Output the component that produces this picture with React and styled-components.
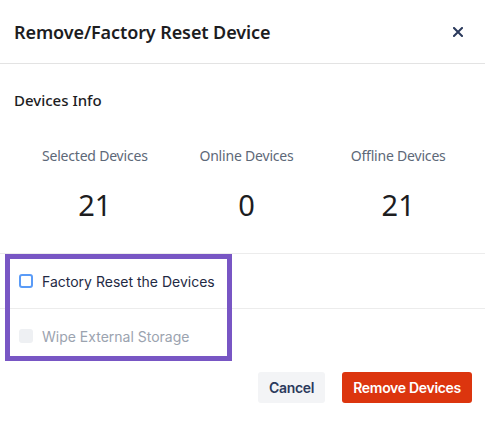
import React, { useState } from 'react';
import styled, { createGlobalStyle } from 'styled-components';

const GlobalStyle = createGlobalStyle`
  html, body {
    margin: 0;
    padding: 0;
    background: #ffffff;
  }
  body {
    font-family: 'Inter', 'Noto Sans', sans-serif;
    -webkit-font-smoothing: antialiased;
  }
`;

const Modal = styled.div`
  position: relative;
  width: 485px;
  height: 431px;
  background: #ffffff;
  font-family: 'Noto Sans', 'Inter', sans-serif;
`;

const Header = styled.div`
  height: 63px;
  display: flex;
  align-items: center;
  justify-content: space-between;
  padding: 0 22px 0 14px;
  border-bottom: 1px solid #e3e3e3;
`;

const Title = styled.h2`
  margin: 0;
  font-size: 18px;
  font-weight: 600;
  color: #1d1d1f;
  letter-spacing: -0.1px;
`;

const CloseButton = styled.button`
  border: none;
  background: none;
  padding: 0;
  display: flex;
  cursor: pointer;
  color: #2b3a5c;
`;

const Section = styled.div`
  padding: 26px 14px 0;
`;

const SectionTitle = styled.h3`
  margin: 0;
  font-size: 15px;
  font-weight: 500;
  color: #1d1d1f;
`;

const StatsGrid = styled.div`
  display: grid;
  grid-template-columns: repeat(3, 1fr);
  padding: 36px 11px 0 19px;
  height: 143px;
  box-sizing: border-box;
`;

const Stat = styled.div`
  display: flex;
  flex-direction: column;
  align-items: center;
`;

const StatLabel = styled.span`
  font-size: 14px;
  color: #5d6878;
  letter-spacing: -0.2px;
`;

const StatValue = styled.span`
  margin-top: 25px;
  font-size: 29px;
  line-height: 1;
  color: #1d1d1f;
`;

const OptionRow = styled.label`
  height: 54px;
  display: flex;
  align-items: center;
  gap: 9px;
  padding-left: 19px;
  border-top: 1px solid #ececec;
  font-family: 'Inter', sans-serif;
  font-size: 14px;
  color: ${p => (p.disabled ? '#9ba3af' : '#1f2a44')};
  cursor: ${p => (p.disabled ? 'default' : 'pointer')};
`;

const Box = styled.span`
  width: 14px;
  height: 14px;
  box-sizing: border-box;
  border-radius: 3px;
  border: ${p => (p.disabled ? 'none' : '2px solid #5a9bf7')};
  background: ${p => (p.disabled ? '#eef0f3' : '#ffffff')};
`;

const Highlight = styled.div`
  position: absolute;
  left: 5px;
  top: 254px;
  width: 227px;
  height: 107px;
  box-sizing: border-box;
  border: 5px solid #7856c4;
  pointer-events: none;
`;

const Footer = styled.div`
  display: flex;
  justify-content: flex-end;
  gap: 17px;
  padding: 9px 13px 0;
`;

const Button = styled.button`
  height: 31px;
  border: none;
  border-radius: 3px;
  padding: 0 11px;
  font-family: 'Inter', sans-serif;
  font-size: 14px;
  font-weight: 600;
  letter-spacing: -0.3px;
  cursor: pointer;
  background: ${p => (p.danger ? '#dc350e' : '#f3f4f6')};
  color: ${p => (p.danger ? '#ffffff' : '#2b3a5c')};
`;

const stats = [
  { label: 'Selected Devices', value: 21 },
  { label: 'Online Devices', value: 0 },
  { label: 'Offline Devices', value: 21 },
];

export default function App() {
  const [reset, setReset] = useState(false);

  return (
    <Modal>
      <GlobalStyle />
      <Header>
        <Title>Remove/Factory Reset Device</Title>
        <CloseButton aria-label="Close">
          <svg width="10" height="10" viewBox="0 0 10 10">
            <path d="M1 1L9 9M9 1L1 9" stroke="currentColor" strokeWidth="2" strokeLinecap="square" />
          </svg>
        </CloseButton>
      </Header>
      <Section>
        <SectionTitle>Devices Info</SectionTitle>
      </Section>
      <StatsGrid>
        {stats.map(s => (
          <Stat key={s.label}>
            <StatLabel>{s.label}</StatLabel>
            <StatValue>{s.value}</StatValue>
          </Stat>
        ))}
      </StatsGrid>
      <OptionRow onClick={() => setReset(!reset)}>
        <Box />
        Factory Reset the Devices
      </OptionRow>
      <OptionRow disabled>
        <Box disabled />
        Wipe External Storage
      </OptionRow>
      <Footer>
        <Button>Cancel</Button>
        <Button danger>Remove Devices</Button>
      </Footer>
      <Highlight />
    </Modal>
  );
}
